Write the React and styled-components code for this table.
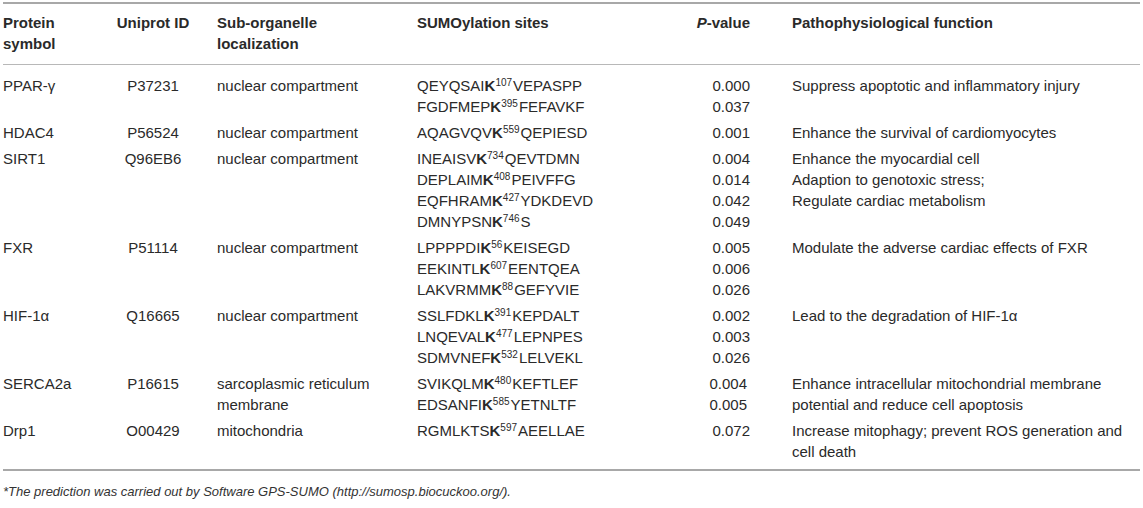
import React from "react";
import styled, { createGlobalStyle } from "styled-components";

const GlobalStyle = createGlobalStyle`
  body {
    margin: 0;
    background: #fff;
    font-family: "Liberation Sans", Arial, sans-serif;
    color: #2a2a2a;
  }
`;

const Wrapper = styled.div`
  width: 1137px;
  padding: 2px 3px 0 3px;
`;

const Table = styled.div`
  border-top: 2px solid #a8a8a8;
  border-bottom: 2px solid #a8a8a8;
`;

const Row = styled.div`
  display: grid;
  grid-template-columns: 102px 96px 216px 233px 100px 1fr;
  font-size: 15px;
  line-height: 21px;
  padding: ${(p) => (p.$head ? "8px 0 10px" : "2px 0 3px")};
  font-weight: ${(p) => (p.$head ? 700 : 400)};
  border-bottom: ${(p) => (p.$head ? "1px solid #b8b8b8" : "none")};
`;

const Body = styled.div`
  padding: 8px 0 4px;
`;

const Cell = styled.div`
  text-align: ${(p) => p.$align || "left"};
  padding-left: ${(p) => p.$pl || 0}px;
  padding-right: ${(p) => p.$pr || 0}px;
`;

const Line = styled.div`
  white-space: nowrap;
`;

const Site = styled.b`
  font-weight: 700;
`;

const Sup = styled.sup`
  font-size: 10px;
  line-height: 0;
  vertical-align: 5px;
  margin-right: 1px;
`;

const Note = styled.div`
  font-size: 13px;
  font-style: italic;
  padding-top: 13px;
  color: #333;
`;

const data = [
  {
    name: "PPAR-γ",
    id: "P37231",
    loc: "nuclear compartment",
    sites: [
      ["QEYQSAI", "107", "VEPASPP", "0.000"],
      ["FGDFMEP", "395", "FEFAVKF", "0.037"],
    ],
    fn: "Suppress apoptotic and inflammatory injury",
  },
  {
    name: "HDAC4",
    id: "P56524",
    loc: "nuclear compartment",
    sites: [["AQAGVQV", "559", "QEPIESD", "0.001"]],
    fn: "Enhance the survival of cardiomyocytes",
  },
  {
    name: "SIRT1",
    id: "Q96EB6",
    loc: "nuclear compartment",
    sites: [
      ["INEAISV", "734", "QEVTDMN", "0.004"],
      ["DEPLAIM", "408", "PEIVFFG", "0.014"],
      ["EQFHRAM", "427", "YDKDEVD", "0.042"],
      ["DMNYPSN", "746", "S", "0.049"],
    ],
    fnLines: [
      "Enhance the myocardial cell",
      "Adaption to genotoxic stress;",
      "Regulate cardiac metabolism",
    ],
  },
  {
    name: "FXR",
    id: "P51114",
    loc: "nuclear compartment",
    sites: [
      ["LPPPPDI", "56", "KEISEGD", "0.005"],
      ["EEKINTL", "607", "EENTQEA", "0.006"],
      ["LAKVRMM", "88", "GEFYVIE", "0.026"],
    ],
    fn: "Modulate the adverse cardiac effects of FXR",
  },
  {
    name: "HIF-1α",
    id: "Q16665",
    loc: "nuclear compartment",
    sites: [
      ["SSLFDKL", "391", "KEPDALT", "0.002"],
      ["LNQEVAL", "477", "LEPNPES", "0.003"],
      ["SDMVNEF", "532", "LELVEKL", "0.026"],
    ],
    fn: "Lead to the degradation of HIF-1α",
  },
  {
    name: "SERCA2a",
    id: "P16615",
    loc: "sarcoplasmic reticulum membrane",
    sites: [
      ["SVIKQLM", "480", "KEFTLEF", "0.004"],
      ["EDSANFI", "585", "YETNLTF", "0.005"],
    ],
    fn: "Enhance intracellular mitochondrial membrane potential and reduce cell apoptosis",
    shiftP: true,
  },
  {
    name: "Drp1",
    id: "O00429",
    loc: "mitochondria",
    sites: [["RGMLKTS", "597", "AEELLAE", "0.072"]],
    fn: "Increase mitophagy; prevent ROS generation and cell death",
  },
];

const App = () => {
  return (
    <Wrapper>
      <GlobalStyle />
      <Table>
        <Row $head>
          <Cell $pr={12}>Protein symbol</Cell>
          <Cell $align="center">Uniprot ID</Cell>
          <Cell $pl={16} $pr={30}>Sub-organelle localization</Cell>
          <Cell>SUMOylation sites</Cell>
          <Cell $align="right">
            <i>P</i>-value
          </Cell>
          <Cell $pl={42}>Pathophysiological function</Cell>
        </Row>
        <Body>
          {data.map((d) => (
            <Row key={d.name}>
              <Cell $pr={12}>{d.name}</Cell>
              <Cell $align="center">{d.id}</Cell>
              <Cell $pl={16} $pr={30}>{d.loc}</Cell>
              <Cell>
                {d.sites.map((s, i) => (
                  <Line key={i}>
                    {s[0]}
                    <Site>K</Site>
                    <Sup>{s[1]}</Sup>
                    {s[2]}
                  </Line>
                ))}
              </Cell>
              <Cell $align="right" $pr={d.shiftP ? 3 : 0}>
                {d.sites.map((s, i) => (
                  <Line key={i}>{s[3]}</Line>
                ))}
              </Cell>
              <Cell $pl={42} $pr={4}>
                {d.fnLines
                  ? d.fnLines.map((f, i) => <Line key={i}>{f}</Line>)
                  : d.fn}
              </Cell>
            </Row>
          ))}
        </Body>
      </Table>
      <Note>
        *The prediction was carried out by Software GPS-SUMO
        (http://sumosp.biocuckoo.org/).
      </Note>
    </Wrapper>
  );
};

export default App;
